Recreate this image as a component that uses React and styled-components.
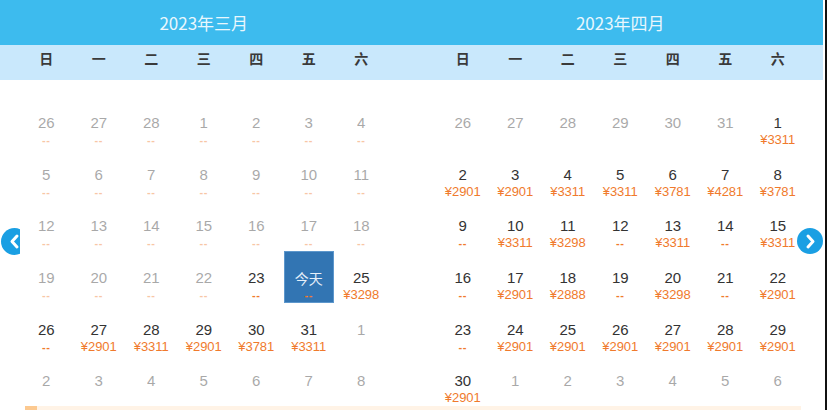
import React from "react";
import styled, { createGlobalStyle } from "styled-components";

const Global = createGlobalStyle`
  html, body { margin: 0; padding: 0; background: #fff; }
  body { font-family: "Liberation Sans", "Noto Sans CJK SC", sans-serif; }
`;

const Frame = styled.div`
  width: 827px;
  height: 410px;
  box-sizing: border-box;
  padding-right: 2px;
  border-right: 2px solid #111;
  overflow: hidden;
  background: #fff;
`;

const Calendar = styled.div`
  position: relative;
  width: 823px;
`;

const Panels = styled.div`
  display: grid;
  grid-template-columns: 367.5px 367.5px;
  column-gap: 49px;
  padding-left: 20px;
  box-sizing: border-box;
`;

const HeaderBar = styled(Panels)`
  height: 45px;
  background: #3dbbee;
`;

const Title = styled.div`
  text-align: center;
  line-height: 45px;
  font-size: 17px;
  color: #e9f7fd;
  font-family: "Noto Sans CJK SC", sans-serif;
`;

const WeekBar = styled(Panels)`
  height: 35px;
  background: #c9e8fc;
`;

const Seven = styled.div`
  display: grid;
  grid-template-columns: repeat(7, 1fr);
`;

const WeekLabel = styled.div`
  text-align: center;
  line-height: 26px;
  font-size: 14px;
  font-weight: 700;
  color: #3a3a3a;
  font-family: "Noto Sans CJK SC", sans-serif;
`;

const Body = styled(Panels)`
  padding-top: 16px;
`;

const MonthGrid = styled(Seven)`
  grid-auto-rows: 51.7px;
`;

const Cell = styled.div`
  display: flex;
  flex-direction: column;
  align-items: center;
  padding-top: 18px;
  box-sizing: border-box;
  opacity: ${(p) => (p.$off ? 0.42 : 1)};
  ${(p) =>
    p.$today &&
    `
    margin: 0 1px;
    background: #3275b3;
    border: 1px solid #5d97cc;
    padding-top: 17px;
  `}
`;

const Num = styled.div`
  line-height: 18px;
  color: ${(p) => (p.$today ? "#e6f0fa" : "#333")};
  font-family: ${(p) =>
    p.$today ? `"Noto Sans CJK SC", sans-serif` : `"Liberation Sans", sans-serif`};
  font-size: ${(p) => (p.$today ? "14px" : "15px")};
`;

const Price = styled.div`
  font-size: 13px;
  line-height: 16px;
  color: #f07a2c;
  font-family: "Liberation Sans", "Noto Sans CJK SC", sans-serif;
`;

const Dash = styled(Price)`
  font-size: 11px;
  font-weight: 700;
  letter-spacing: 0.5px;
`;

const LeftArrowClip = styled.div`
  position: absolute;
  left: 0;
  top: 228px;
  width: 20px;
  height: 27px;
  overflow: hidden;
`;

const Circle = styled.div`
  width: ${(p) => p.$d}px;
  height: ${(p) => p.$d}px;
  border-radius: 50%;
  background: #1a9fe3;
  display: flex;
  align-items: center;
  justify-content: center;
  margin-left: ${(p) => p.$ml || 0}px;
  box-sizing: border-box;
  padding-left: ${(p) => p.$pl || 0}px;
`;

const RightArrow = styled.div`
  position: absolute;
  left: 797px;
  top: 228px;
`;

const Strip = styled.div`
  margin: 0 0 0 25px;
  width: 776px;
  height: 10px;
  background: #fff3e6;
  display: flex;
`;

const StripMark = styled.div`
  width: 12px;
  background: #fcc990;
`;

const WEEK = ["日", "一", "二", "三", "四", "五", "六"];

// [day, price | "--" | null, off, today]
const march = [
  ["26", "--", 1], ["27", "--", 1], ["28", "--", 1], ["1", "--", 1], ["2", "--", 1], ["3", "--", 1], ["4", "--", 1],
  ["5", "--", 1], ["6", "--", 1], ["7", "--", 1], ["8", "--", 1], ["9", "--", 1], ["10", "--", 1], ["11", "--", 1],
  ["12", "--", 1], ["13", "--", 1], ["14", "--", 1], ["15", "--", 1], ["16", "--", 1], ["17", "--", 1], ["18", "--", 1],
  ["19", "--", 1], ["20", "--", 1], ["21", "--", 1], ["22", "--", 1], ["23", "--", 0], ["今天", "--", 0, 1], ["25", "¥3298", 0],
  ["26", "--", 0], ["27", "¥2901", 0], ["28", "¥3311", 0], ["29", "¥2901", 0], ["30", "¥3781", 0], ["31", "¥3311", 0], ["1", null, 1],
  ["2", null, 1], ["3", null, 1], ["4", null, 1], ["5", null, 1], ["6", null, 1], ["7", null, 1], ["8", null, 1],
];

const april = [
  ["26", null, 1], ["27", null, 1], ["28", null, 1], ["29", null, 1], ["30", null, 1], ["31", null, 1], ["1", "¥3311", 0],
  ["2", "¥2901", 0], ["3", "¥2901", 0], ["4", "¥3311", 0], ["5", "¥3311", 0], ["6", "¥3781", 0], ["7", "¥4281", 0], ["8", "¥3781", 0],
  ["9", "--", 0], ["10", "¥3311", 0], ["11", "¥3298", 0], ["12", "--", 0], ["13", "¥3311", 0], ["14", "--", 0], ["15", "¥3311", 0],
  ["16", "--", 0], ["17", "¥2901", 0], ["18", "¥2888", 0], ["19", "--", 0], ["20", "¥3298", 0], ["21", "--", 0], ["22", "¥2901", 0],
  ["23", "--", 0], ["24", "¥2901", 0], ["25", "¥2901", 0], ["26", "¥2901", 0], ["27", "¥2901", 0], ["28", "¥2901", 0], ["29", "¥2901", 0],
  ["30", "¥2901", 0], ["1", null, 1], ["2", null, 1], ["3", null, 1], ["4", null, 1], ["5", null, 1], ["6", null, 1],
];

function Month({ days }) {
  return (
    <MonthGrid>
      {days.map(([d, p, off, today], i) => (
        <Cell key={i} $off={!!off} $today={!!today}>
          <Num $today={!!today}>{d}</Num>
          {p === "--" ? <Dash>--</Dash> : p ? <Price>{p}</Price> : null}
        </Cell>
      ))}
    </MonthGrid>
  );
}

function Chevron({ dir }) {
  const pts = dir === "left" ? "9,3 4,8.5 9,14" : "4,3 9,8.5 4,14";
  return (
    <svg width="13" height="17" viewBox="0 0 13 17">
      <polyline points={pts} fill="none" stroke="#fff" strokeWidth="3" strokeLinecap="round" strokeLinejoin="round" />
    </svg>
  );
}

export default function App() {
  return (
    <>
      <Global />
      <Frame>
        <Calendar>
          <HeaderBar>
            <Title>2023年三月</Title>
            <Title>2023年四月</Title>
          </HeaderBar>
          <WeekBar>
            {[0, 1].map((k) => (
              <Seven key={k}>
                {WEEK.map((w) => (
                  <WeekLabel key={w}>{w}</WeekLabel>
                ))}
              </Seven>
            ))}
          </WeekBar>
          <Body>
            <Month days={march} />
            <Month days={april} />
          </Body>
          <LeftArrowClip>
            <Circle $d={27} $ml={1} $pl={0}>
              <Chevron dir="left" />
            </Circle>
          </LeftArrowClip>
          <RightArrow>
            <Circle $d={26} $pl={1}>
              <Chevron dir="right" />
            </Circle>
          </RightArrow>
        </Calendar>
        <Strip>
          <StripMark />
        </Strip>
      </Frame>
    </>
  );
}
